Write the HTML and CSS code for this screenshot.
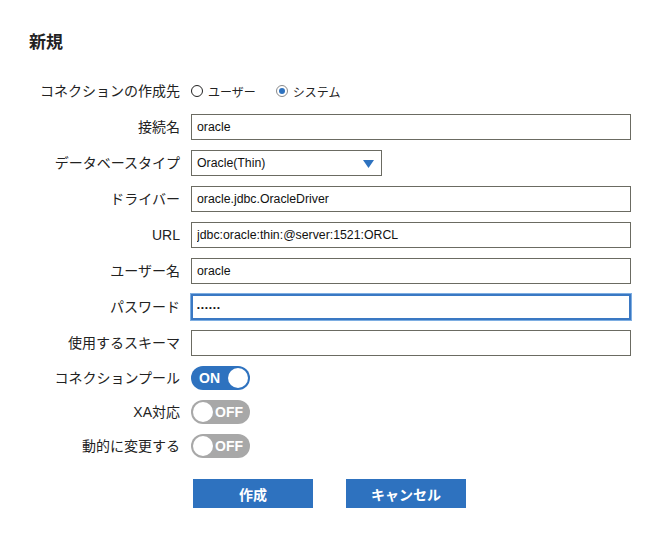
FILE: index.html
```html
<!DOCTYPE html>
<html lang="ja">
<head>
  <meta charset="UTF-8">
  <meta name="viewport" content="width=device-width, initial-scale=1.0">
  <title>新規</title>
  <link rel="stylesheet" href="styles.css">
</head>
<body>
  <div class="page">
    <h1 class="title">新規</h1>
    <form class="form" onsubmit="return false">
      <label class="label">コネクションの作成先</label>
      <div class="radios">
        <label class="radio"><input type="radio" name="target" value="user"> ユーザー</label>
        <label class="radio"><input type="radio" name="target" value="system" checked> システム</label>
      </div>

      <label class="label" for="name">接続名</label>
      <input class="input" id="name" type="text" value="oracle">

      <label class="label" for="dbtype">データベースタイプ</label>
      <div class="select-wrap">
        <select class="select" id="dbtype">
          <option>Oracle(Thin)</option>
          <option>Oracle(OCI)</option>
          <option>PostgreSQL</option>
          <option>MySQL</option>
        </select>
        <svg class="select-arrow" width="11" height="8" viewBox="0 0 11 8"><path d="M0 0H11L5.5 8Z" fill="#2e72bf"/></svg>
      </div>

      <label class="label" for="driver">ドライバー</label>
      <input class="input" id="driver" type="text" value="oracle.jdbc.OracleDriver">

      <label class="label" for="url">URL</label>
      <input class="input" id="url" type="text" value="jdbc:oracle:thin:@server:1521:ORCL">

      <label class="label" for="user">ユーザー名</label>
      <input class="input" id="user" type="text" value="oracle">

      <label class="label" for="password">パスワード</label>
      <input class="input password" id="password" type="password" value="oracle" autofocus>

      <label class="label" for="schema">使用するスキーマ</label>
      <input class="input" id="schema" type="text" value="">

      <label class="label">コネクションプール</label>
      <div class="toggle on"><span class="toggle-text">ON</span><span class="knob"></span></div>

      <label class="label">XA対応</label>
      <div class="toggle"><span class="knob"></span><span class="toggle-text">OFF</span></div>

      <label class="label">動的に変更する</label>
      <div class="toggle"><span class="knob"></span><span class="toggle-text">OFF</span></div>
    </form>
    <div class="actions">
      <button class="btn" type="button">作成</button>
      <button class="btn" type="button">キャンセル</button>
    </div>
  </div>

  <script>
    document.querySelectorAll('.toggle').forEach(t => {
      t.addEventListener('click', function () {
        const on = this.classList.toggle('on');
        this.innerHTML = on
          ? '<span class="toggle-text">ON</span><span class="knob"></span>'
          : '<span class="knob"></span><span class="toggle-text">OFF</span>';
      });
    });
  </script>
</body>
</html>
```

FILE: styles.css
```css
body {
  margin: 0;
  padding: 0;
  background: #fff;
  color: #222;
  font-family: "Liberation Sans", "Noto Sans CJK JP", sans-serif;
}
.page {
  padding-left: 29px;
}
.title {
  margin: 31px 0 23px;
  font-size: 17px;
  line-height: 24px;
  font-weight: bold;
}
.form {
  display: grid;
  grid-template-columns: 151px 440px;
  column-gap: 11px;
  row-gap: 10px;
  align-items: center;
}
.label {
  text-align: right;
  font-size: 14px;
  line-height: 20px;
  white-space: nowrap;
}
.radios {
  display: flex;
  align-items: center;
  gap: 20px;
  height: 26px;
}
.radio {
  display: flex;
  align-items: center;
  gap: 5px;
  font-size: 12px;
}
.radio input {
  appearance: none;
  -webkit-appearance: none;
  box-sizing: border-box;
  display: grid;
  place-items: center;
  margin: 0;
  width: 12px;
  height: 12px;
  border: 1px solid #222;
  border-radius: 50%;
  background: #fff;
}
.radio input:checked {
  border-color: #8a8a8a;
}
.radio input:checked::before {
  content: "";
  width: 6px;
  height: 6px;
  border-radius: 50%;
  background: #2e72bf;
}
.input {
  box-sizing: border-box;
  width: 440px;
  height: 26px;
  margin: 0;
  padding: 0 5px;
  border: 1px solid #6b6b62;
  border-radius: 0;
  font-family: "Liberation Sans", "Noto Sans CJK JP", sans-serif;
  font-size: 12.3px;
  color: #111;
  background: #fff;
  caret-color: #000;
}
.input:focus {
  outline: none;
  border: 2px solid #3a78c3;
  padding-left: 4px;
  box-shadow: 0 0 0 1px #7eaee2;
}
.password {
  font-size: 8px;
  letter-spacing: 1.2px;
}
.select-wrap {
  position: relative;
  width: 191px;
}
.select {
  box-sizing: border-box;
  width: 191px;
  height: 26px;
  margin: 0;
  padding: 0 24px 0 5px;
  border: 1px solid #6b6b62;
  border-radius: 0;
  background: #fff;
  font-family: "Liberation Sans", "Noto Sans CJK JP", sans-serif;
  font-size: 12.3px;
  color: #111;
  appearance: none;
  -webkit-appearance: none;
}
.select-arrow {
  position: absolute;
  right: 8px;
  top: 10px;
  pointer-events: none;
}
.toggle {
  box-sizing: border-box;
  display: flex;
  align-items: center;
  justify-content: space-between;
  width: 59px;
  height: 24px;
  padding: 0 2px;
  border-radius: 12px;
  background: #a8a8a8;
  cursor: pointer;
}
.toggle.on {
  background: #2e72bf;
  padding-left: 8px;
}
.toggle-text {
  color: #fff;
  font-size: 14px;
  font-weight: bold;
  line-height: 24px;
  padding-right: 5px;
}
.knob {
  box-sizing: border-box;
  width: 20px;
  height: 20px;
  border-radius: 50%;
  background: #fff;
}
.toggle.on .toggle-text {
  padding-right: 0;
}
.actions {
  display: flex;
  gap: 33px;
  margin-top: 21px;
  padding-left: 164px;
}
.btn {
  width: 120px;
  height: 29px;
  border: none;
  border-radius: 0;
  background: #2e72bf;
  color: #fff;
  font-family: "Liberation Sans", "Noto Sans CJK JP", sans-serif;
  font-size: 14px;
  font-weight: bold;
  cursor: pointer;
}
```
